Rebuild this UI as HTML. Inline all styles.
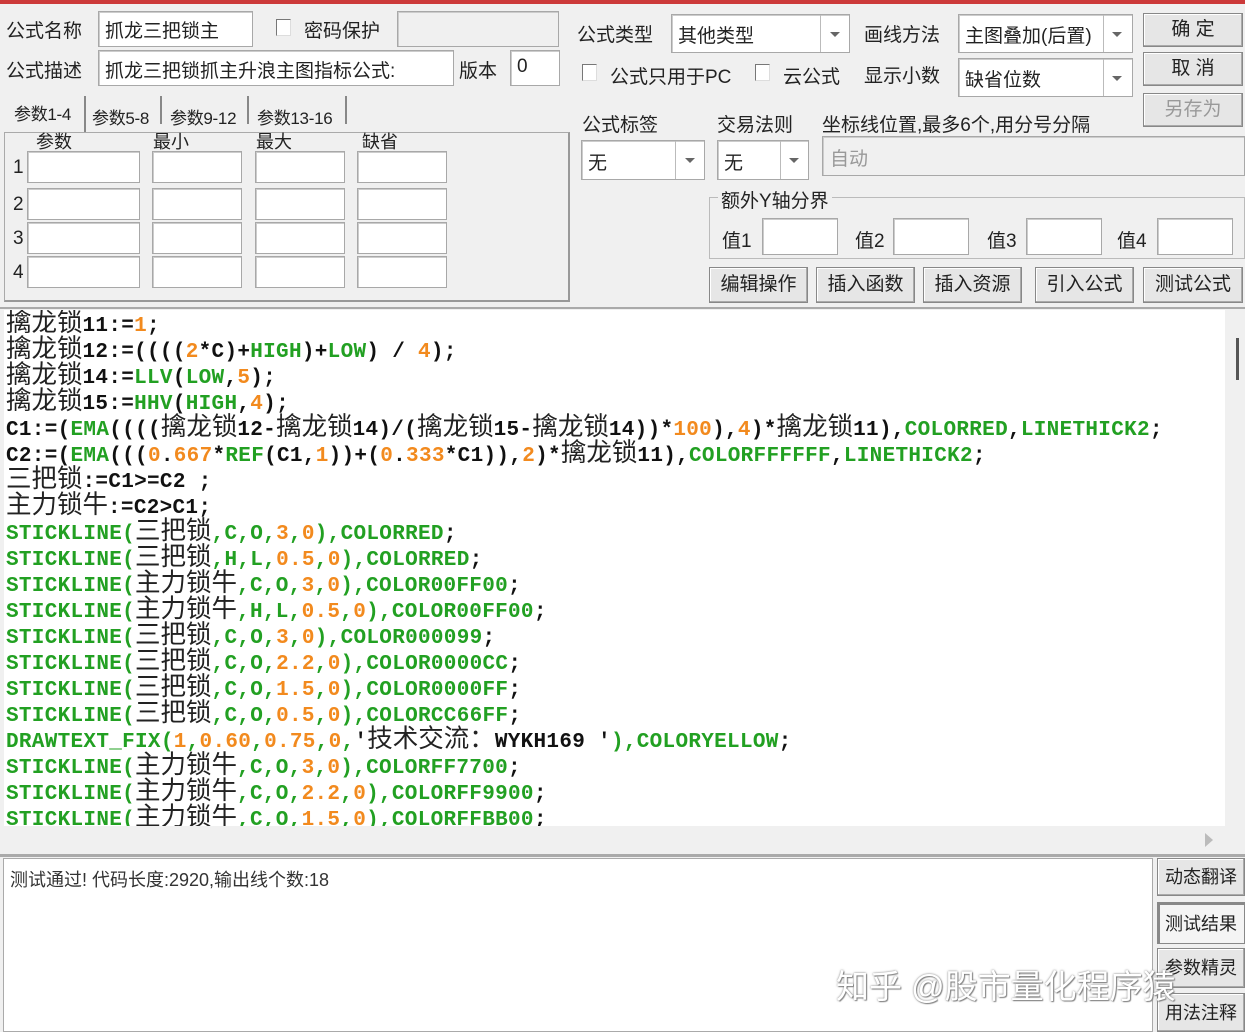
<!DOCTYPE html>
<html><head><meta charset="utf-8"><style>
*{box-sizing:border-box;margin:0;padding:0}
body{width:1245px;height:1032px;overflow:hidden;background:#f0f0f0;position:relative;font-family:"Liberation Sans","Noto Sans CJK SC",sans-serif;font-size:19px;color:#222}
.a{position:absolute;white-space:nowrap}
.box{position:absolute;background:#fff;border:1px solid #a8a8a8;box-shadow:inset 1px 1px 0 #ccc}
.dis{background:#f0f0f0}
.btn{position:absolute;background:#e6e6e6;border:1px solid #888;box-shadow:inset -1px -1px 0 #aaa,inset 1px 1px 0 #fff;text-align:center;font-size:19px;line-height:28px}
.dd{position:absolute;width:1px;background:#bbb}
.arr{position:absolute;width:0;height:0;border-left:5px solid transparent;border-right:5px solid transparent;border-top:5px solid #666}
.cb{position:absolute;width:15px;height:17px;background:#fff;border:1px solid #777;border-right-color:#ddd;border-bottom-color:#ddd}
#code{position:absolute;left:4px;top:310px;width:1221px;height:516px;background:#fff;overflow:hidden}
.ln{position:absolute;left:2px;height:26px;line-height:26px;font-family:"Liberation Mono","Noto Sans CJK SC",monospace;font-weight:bold;font-size:21px;letter-spacing:0.3px;color:#111;white-space:nowrap}
.ln .z{font-family:"Liberation Sans","Noto Sans CJK SC",sans-serif;font-weight:normal;font-size:25.5px;letter-spacing:0;color:#222}
.g{color:#22a022}.o{color:#f28a1e}
.tab{position:absolute;font-size:17px;letter-spacing:-0.3px;white-space:nowrap}
.sep{position:absolute;width:2px;background:#888}
.pb{position:absolute;background:#fff;border:1px solid #a8a8a8;box-shadow:inset 1px 1px 0 #ccc}
</style></head><body>
<div class="a" style="left:0;top:0;width:1245px;height:4px;background:#cc3a3a"></div>
<div class="a" style="left:6px;top:16px">公式名称</div>
<div class="box" style="left:98px;top:11px;width:155px;height:36px"></div>
<div class="a" style="left:105px;top:16px">抓龙三把锁主</div>
<div class="cb" style="left:276px;top:19px"></div>
<div class="a" style="left:304px;top:16px">密码保护</div>
<div class="box dis" style="left:397px;top:11px;width:162px;height:36px"></div>
<div class="a" style="left:6px;top:56px">公式描述</div>
<div class="box" style="left:98px;top:50px;width:356px;height:36px"></div>
<div class="a" style="left:105px;top:56px">抓龙三把锁抓主升浪主图指标公式:</div>
<div class="a" style="left:459px;top:56px">版本</div>
<div class="box" style="left:510px;top:50px;width:50px;height:36px"></div>
<div class="a" style="left:517px;top:56px">0</div>
<div class="a" style="left:4px;top:132px;width:566px;height:170px;border:1px solid #aaa;border-right:2px solid #999;border-bottom:2px solid #999"></div>
<div class="tab" style="left:14px;top:100px">参数1-4</div>
<div class="sep" style="left:84px;top:96px;height:36px"></div>
<div class="tab" style="left:92px;top:104px">参数5-8</div>
<div class="sep" style="left:160px;top:96px;height:28px"></div>
<div class="tab" style="left:170px;top:104px">参数9-12</div>
<div class="sep" style="left:247px;top:96px;height:28px"></div>
<div class="tab" style="left:257px;top:104px">参数13-16</div>
<div class="sep" style="left:345px;top:96px;height:28px"></div>
<div class="a" style="left:36px;top:128px;font-size:18px">参数</div>
<div class="a" style="left:153px;top:128px;font-size:18px">最小</div>
<div class="a" style="left:256px;top:128px;font-size:18px">最大</div>
<div class="a" style="left:362px;top:128px;font-size:18px">缺省</div>
<div class="a" style="left:13px;top:157px">1</div><div class="a" style="left:13px;top:194px">2</div><div class="a" style="left:13px;top:228px">3</div><div class="a" style="left:13px;top:262px">4</div>
<div class="pb" style="left:27px;top:151px;width:113px;height:32px"></div><div class="pb" style="left:152px;top:151px;width:90px;height:32px"></div><div class="pb" style="left:255px;top:151px;width:90px;height:32px"></div><div class="pb" style="left:357px;top:151px;width:90px;height:32px"></div>
<div class="pb" style="left:27px;top:188px;width:113px;height:32px"></div><div class="pb" style="left:152px;top:188px;width:90px;height:32px"></div><div class="pb" style="left:255px;top:188px;width:90px;height:32px"></div><div class="pb" style="left:357px;top:188px;width:90px;height:32px"></div>
<div class="pb" style="left:27px;top:222px;width:113px;height:32px"></div><div class="pb" style="left:152px;top:222px;width:90px;height:32px"></div><div class="pb" style="left:255px;top:222px;width:90px;height:32px"></div><div class="pb" style="left:357px;top:222px;width:90px;height:32px"></div>
<div class="pb" style="left:27px;top:256px;width:113px;height:32px"></div><div class="pb" style="left:152px;top:256px;width:90px;height:32px"></div><div class="pb" style="left:255px;top:256px;width:90px;height:32px"></div><div class="pb" style="left:357px;top:256px;width:90px;height:32px"></div>
<div class="a" style="left:577px;top:20px">公式类型</div>
<div class="box" style="left:671px;top:14px;width:179px;height:39px"></div><div class="dd" style="left:820px;top:15px;height:37px"></div><div class="arr" style="left:830px;top:32px"></div>
<div class="a" style="left:678px;top:21px">其他类型</div>
<div class="a" style="left:864px;top:20px">画线方法</div>
<div class="box" style="left:958px;top:14px;width:175px;height:39px"></div><div class="dd" style="left:1103px;top:15px;height:37px"></div><div class="arr" style="left:1112px;top:32px"></div>
<div class="a" style="left:965px;top:21px">主图叠加(后置)</div>
<div class="cb" style="left:582px;top:64px"></div><div class="a" style="left:610px;top:62px">公式只用于PC</div>
<div class="cb" style="left:755px;top:64px"></div><div class="a" style="left:783px;top:62px">云公式</div>
<div class="a" style="left:864px;top:61px">显示小数</div>
<div class="box" style="left:958px;top:58px;width:175px;height:39px"></div><div class="dd" style="left:1103px;top:59px;height:37px"></div><div class="arr" style="left:1112px;top:76px"></div>
<div class="a" style="left:965px;top:65px">缺省位数</div>
<div class="btn" style="left:1143px;top:13px;width:100px;height:34px;line-height:32px">确 定</div>
<div class="btn" style="left:1143px;top:52px;width:100px;height:34px;line-height:32px">取 消</div>
<div class="btn" style="left:1143px;top:93px;width:100px;height:34px;line-height:32px;color:#999">另存为</div>
<div class="a" style="left:582px;top:110px">公式标签</div>
<div class="a" style="left:717px;top:110px">交易法则</div>
<div class="a" style="left:822px;top:110px">坐标线位置,最多6个,用分号分隔</div>
<div class="box" style="left:581px;top:140px;width:124px;height:40px"></div><div class="dd" style="left:675px;top:141px;height:38px"></div><div class="arr" style="left:685px;top:158px"></div><div class="a" style="left:588px;top:148px">无</div>
<div class="box" style="left:717px;top:140px;width:92px;height:40px"></div><div class="dd" style="left:780px;top:141px;height:38px"></div><div class="arr" style="left:789px;top:158px"></div><div class="a" style="left:724px;top:148px">无</div>
<div class="box dis" style="left:822px;top:136px;width:423px;height:40px"></div><div class="a" style="left:830px;top:144px;color:#999">自动</div>
<div class="a" style="left:709px;top:197px;width:536px;height:62px;border:1px solid #bbb"></div>
<div class="a" style="left:718px;top:186px;background:#f0f0f0;padding:0 3px">额外Y轴分界</div>
<div class="a" style="left:722px;top:226px">值1</div><div class="box" style="left:762px;top:218px;width:76px;height:37px"></div>
<div class="a" style="left:855px;top:226px">值2</div><div class="box" style="left:893px;top:218px;width:76px;height:37px"></div>
<div class="a" style="left:987px;top:226px">值3</div><div class="box" style="left:1026px;top:218px;width:76px;height:37px"></div>
<div class="a" style="left:1117px;top:226px">值4</div><div class="box" style="left:1157px;top:218px;width:76px;height:37px"></div>
<div class="btn" style="left:709px;top:267px;width:99px;height:36px;line-height:34px">编辑操作</div>
<div class="btn" style="left:816px;top:267px;width:99px;height:36px;line-height:34px">插入函数</div>
<div class="btn" style="left:923px;top:267px;width:99px;height:36px;line-height:34px">插入资源</div>
<div class="btn" style="left:1035px;top:267px;width:99px;height:36px;line-height:34px">引入公式</div>
<div class="btn" style="left:1143px;top:267px;width:100px;height:36px;line-height:34px">测试公式</div>
<div class="a" style="left:0;top:307px;width:1245px;height:2px;background:#aaa"></div>
<div id="code">
<div class="ln" style="top:0"><span class="z">擒龙锁</span>11:=<span class="o">1</span>;</div>
<div class="ln" style="top:26px"><span class="z">擒龙锁</span>12:=((((<span class="o">2</span>*C)+<span class="g">HIGH</span>)+<span class="g">LOW</span>) / <span class="o">4</span>);</div>
<div class="ln" style="top:52px"><span class="z">擒龙锁</span>14:=<span class="g">LLV</span>(<span class="g">LOW</span>,<span class="o">5</span>);</div>
<div class="ln" style="top:78px"><span class="z">擒龙锁</span>15:=<span class="g">HHV</span>(<span class="g">HIGH</span>,<span class="o">4</span>);</div>
<div class="ln" style="top:104px">C1:=(<span class="g">EMA</span>((((<span class="z">擒龙锁</span>12-<span class="z">擒龙锁</span>14)/(<span class="z">擒龙锁</span>15-<span class="z">擒龙锁</span>14))*<span class="o">100</span>),<span class="o">4</span>)*<span class="z">擒龙锁</span>11),<span class="g">COLORRED</span>,<span class="g">LINETHICK2</span>;</div>
<div class="ln" style="top:130px">C2:=(<span class="g">EMA</span>(((<span class="o">0</span>.<span class="o">667</span>*<span class="g">REF</span>(C1,<span class="o">1</span>))+(<span class="o">0</span>.<span class="o">333</span>*C1)),<span class="o">2</span>)*<span class="z">擒龙锁</span>11),<span class="g">COLORFFFFFF</span>,<span class="g">LINETHICK2</span>;</div>
<div class="ln" style="top:156px"><span class="z">三把锁</span>:=C1>=C2 ;</div>
<div class="ln" style="top:182px"><span class="z">主力锁牛</span>:=C2>C1;</div>
<div class="ln g" style="top:208px">STICKLINE(<span class="z">三把锁</span>,C,O,<span class="o">3</span>,<span class="o">0</span>),COLORRED<span style="color:#111">;</span></div>
<div class="ln g" style="top:234px">STICKLINE(<span class="z">三把锁</span>,H,L,<span class="o">0.5</span>,<span class="o">0</span>),COLORRED<span style="color:#111">;</span></div>
<div class="ln g" style="top:260px">STICKLINE(<span class="z">主力锁牛</span>,C,O,<span class="o">3</span>,<span class="o">0</span>),COLOR00FF00<span style="color:#111">;</span></div>
<div class="ln g" style="top:286px">STICKLINE(<span class="z">主力锁牛</span>,H,L,<span class="o">0.5</span>,<span class="o">0</span>),COLOR00FF00<span style="color:#111">;</span></div>
<div class="ln g" style="top:312px">STICKLINE(<span class="z">三把锁</span>,C,O,<span class="o">3</span>,<span class="o">0</span>),COLOR000099<span style="color:#111">;</span></div>
<div class="ln g" style="top:338px">STICKLINE(<span class="z">三把锁</span>,C,O,<span class="o">2.2</span>,<span class="o">0</span>),COLOR0000CC<span style="color:#111">;</span></div>
<div class="ln g" style="top:364px">STICKLINE(<span class="z">三把锁</span>,C,O,<span class="o">1.5</span>,<span class="o">0</span>),COLOR0000FF<span style="color:#111">;</span></div>
<div class="ln g" style="top:390px">STICKLINE(<span class="z">三把锁</span>,C,O,<span class="o">0.5</span>,<span class="o">0</span>),COLORCC66FF<span style="color:#111">;</span></div>
<div class="ln g" style="top:416px">DRAWTEXT_FIX(<span class="o">1</span>,<span class="o">0.60</span>,<span class="o">0.75</span>,<span class="o">0</span>,<span style="color:#111">'<span class="z">技术交流：</span>WYKH169 '</span>),COLORYELLOW<span style="color:#111">;</span></div>
<div class="ln g" style="top:442px">STICKLINE(<span class="z">主力锁牛</span>,C,O,<span class="o">3</span>,<span class="o">0</span>),COLORFF7700<span style="color:#111">;</span></div>
<div class="ln g" style="top:468px">STICKLINE(<span class="z">主力锁牛</span>,C,O,<span class="o">2.2</span>,<span class="o">0</span>),COLORFF9900<span style="color:#111">;</span></div>
<div class="ln g" style="top:494px">STICKLINE(<span class="z">主力锁牛</span>,C,O,<span class="o">1.5</span>,<span class="o">0</span>),COLORFFBB00<span style="color:#111">;</span></div>
</div>
<div class="a" style="left:1225px;top:310px;width:20px;height:518px;background:#f0f0f0"></div>
<div class="a" style="left:1236px;top:338px;width:3px;height:42px;background:#555"></div>
<div class="a" style="left:4px;top:826px;width:1241px;height:28px;background:#f0f0f0"></div>
<div class="a" style="left:1205px;top:833px;width:0;height:0;border-top:7px solid transparent;border-bottom:7px solid transparent;border-left:8px solid #bbb"></div>
<div class="a" style="left:0;top:854px;width:1245px;height:3px;background:#aaa"></div>
<div class="a" style="left:3px;top:858px;width:1150px;height:174px;background:#fff;border:1px solid #aaa"></div>
<div class="a" style="left:10px;top:866px;font-size:18px;color:#333">测试通过! 代码长度:2920,输出线个数:18</div>
<div class="btn" style="left:1157px;top:858px;width:88px;height:38px;line-height:36px;font-size:18px">动态翻译</div>
<div class="btn" style="left:1157px;top:902px;width:88px;height:42px;line-height:42px;font-size:18px;background:#f4f4f4;box-shadow:inset 2px 2px 0 #888">测试结果</div>
<div class="btn" style="left:1157px;top:948px;width:88px;height:40px;line-height:38px;font-size:18px">参数精灵</div>
<div class="btn" style="left:1157px;top:993px;width:88px;height:39px;line-height:38px;font-size:18px">用法注释</div>
<div class="a" style="left:836px;top:960px;font-size:33px;color:#fff;text-shadow:0 0 2px #777,1px 1px 1px #888">知乎 @股市量化程序猿</div>
</body></html>
